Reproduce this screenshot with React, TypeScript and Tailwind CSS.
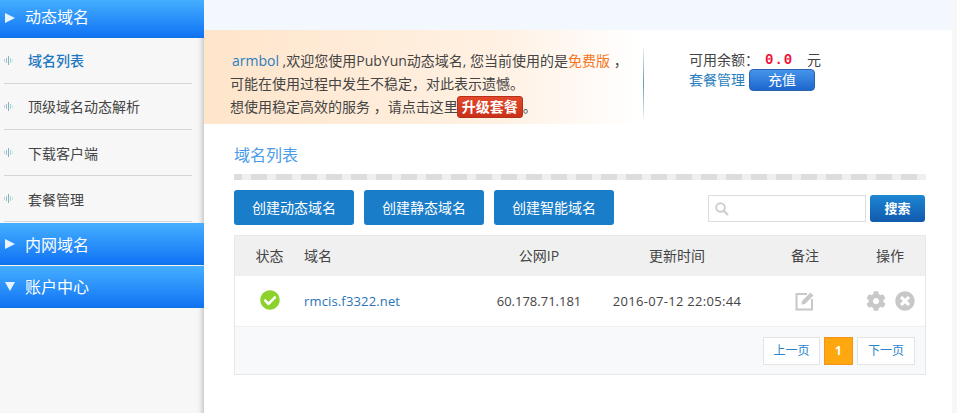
import { FaCheckCircle, FaCog, FaTimesCircle } from 'react-icons/fa'

const font = "font-['Open_Sans','Noto_Sans_CJK_SC',sans-serif]"

const menuItems = [
  { name: '域名列表', textClass: 'font-medium text-[#1f78c1]' },
  { name: '顶级域名动态解析', textClass: '' },
  { name: '下载客户端', textClass: 'mt-[2px]' },
  { name: '套餐管理', textClass: 'mt-[2px]' },
]

function Bullet() {
  return (
    <svg width="9" height="9" viewBox="0 0 9 9" className="shrink-0">
      <rect x="0" y="3" width="1" height="3" fill="#b9d4d8" />
      <rect x="2" y="2" width="1" height="5" fill="#9cc0c8" />
      <rect x="4" y="0" width="1" height="9" fill="#86b4bd" />
      <rect x="6" y="2" width="1" height="5" fill="#9fd8dc" />
      <rect x="8" y="3" width="1" height="3" fill="#c4eaec" />
    </svg>
  )
}

function SideHeader({ title, open }: { title: string; open?: boolean }) {
  return (
    <div
      className={`relative flex h-[42px] items-center gap-[10px] border-b-2 border-[#0f74e8] bg-gradient-to-b from-[#45aeff] to-[#1274f4] pl-[5px] text-[16px] text-white ${
        open ? 'pt-px' : 'pt-[3px]'
      }`}
    >
      <svg width="10" height="10" viewBox="0 0 10 10" className="-mt-[2px] shrink-0">
        {open ? <path d="M0 1 H10 L5 10 Z" fill="#e8f4ff" /> : <path d="M0 0 L10 5 L0 10 Z" fill="#e8f4ff" />}
      </svg>
      <span>{title}</span>
    </div>
  )
}

function Sidebar() {
  return (
    <aside className="w-[204px] shrink-0 bg-[#f7f7f7] shadow-[inset_-6px_0_5px_-4px_#c4c4c4]">
      <div className="relative flex h-[38px] items-center gap-[10px] border-b-2 border-[#0f74e8] bg-gradient-to-b from-[#45aeff] to-[#1274f4] pb-[2px] pl-[5px] text-[16px] text-white">
        <svg width="10" height="10" viewBox="0 0 10 10" className="mt-[2px] shrink-0">
          <path d="M0 0 L10 5 L0 10 Z" fill="#e8f4ff" />
        </svg>
        <span>动态域名</span>
      </div>
      <ul className="pb-px pl-[4px] pr-[12px]">
        {menuItems.map((item) => (
          <li
            key={item.name}
            className="flex h-[46px] items-center gap-[15px] border-b border-[#d6d6d6] text-[14px] text-[#444]"
          >
            <Bullet />
            <span className={item.textClass}>{item.name}</span>
          </li>
        ))}
      </ul>
      <SideHeader title="内网域名" />
      <div className="mt-px">
        <SideHeader title="账户中心" open />
      </div>
    </aside>
  )
}

function Banner() {
  return (
    <div className="flex h-[94px] bg-gradient-to-r from-[#fee5cb] via-[#fff1e3] via-40% to-white to-[58%] text-[14px] text-[#444]">
      <div className="w-[439px] shrink-0 pl-[26px] pt-[19px] leading-[23px]">
        <div className="whitespace-nowrap">
          <span className="ml-[2px] text-[#2a7ec0]">armbol</span> ,欢迎您使用PubYun动态域名, 您当前使用的是
          <span className="text-[#f5761f]">免费版</span> ，
        </div>
        <div className="whitespace-nowrap">可能在使用过程中发生不稳定，对此表示遗憾。</div>
        <div className="flex items-center whitespace-nowrap">
          想使用稳定高效的服务 ，请点击这里
          <span className="-ml-[1px] inline-flex h-[22px] w-[66px] items-center justify-center rounded-[3px] border border-[#b8301a] bg-gradient-to-b from-[#e2492a] to-[#c9301a] text-[14px] font-bold leading-none text-white">
            升级套餐
          </span>
          。
        </div>
      </div>
      <div className="mt-[17px] h-[72px] w-px bg-gradient-to-b from-[#f0f6f6] via-[#5f9ca6] to-[#f0f6f6]" />
      <div className="pl-[45px] pt-[20px] leading-[20px]">
        <div className="flex h-[19px] whitespace-nowrap">
          <span className="w-[76px]">可用余额：</span>
          <span className="w-[42px] font-['Liberation_Mono',monospace] font-bold tracking-[1px] text-[#f0103a]">0.0</span>
          <span>元</span>
        </div>
        <div className="flex items-center gap-[4px]">
          <span className="text-[#2a7ec0]">套餐管理</span>
          <button className="h-[22px] w-[66px] rounded-[4px] border border-[#2b62b0] bg-gradient-to-b from-[#4595ea] to-[#1d66cd] leading-none text-white">
            充值
          </button>
        </div>
      </div>
    </div>
  )
}

function Toolbar() {
  return (
    <div className="mt-[10px] flex items-start">
      <div className="flex gap-[10px]">
        {['创建动态域名', '创建静态域名', '创建智能域名'].map((label) => (
          <button key={label} className="h-[35px] w-[120px] rounded-[3px] bg-[#1a7dc9] text-[14px] text-white">
            {label}
          </button>
        ))}
      </div>
      <div className="ml-auto mr-px mt-[5px] flex gap-[4px]">
        <div className="flex h-[27px] w-[158px] items-center border border-[#dcdcdc] bg-white pl-[6px]">
          <svg width="14" height="14" viewBox="0 0 14 14" fill="none" stroke="#cfcfcf">
            <circle cx="5.5" cy="5.5" r="4.3" strokeWidth="2" />
            <path d="M8.8 8.8 L13 13" strokeWidth="2.4" />
          </svg>
        </div>
        <button className="h-[27px] w-[55px] rounded-[3px] bg-gradient-to-b from-[#1e87d2] to-[#1259ae] text-[13px] font-bold text-white">
          搜索
        </button>
      </div>
    </div>
  )
}

const rowGrid = 'grid grid-cols-[69px_171px_128px_148px_108px_62px] items-center'

function DomainTable() {
  return (
    <div className="mt-[10px] border border-[#e8e8e8] text-[14px] text-[#444]">
      <div className={`${rowGrid} h-[40px] bg-[#f0f0f0] pb-[2px] text-center`}>
        <span>状态</span>
        <span className="text-left">域名</span>
        <span>公网IP</span>
        <span>更新时间</span>
        <span>备注</span>
        <span>操作</span>
      </div>
      <div className={`${rowGrid} h-[50px] bg-white text-center text-[13px]`}>
        <span className="-mt-[3px] flex justify-center">
          <FaCheckCircle className="text-[20px] text-[#8cd12c]" />
        </span>
        <span className="mt-[2px] text-left tracking-[0.15px] text-[#2a75b8]">rmcis.f3322.net</span>
        <span className="mt-[2px]">60.178.71.181</span>
        <span className="mt-[2px] tracking-[0.3px]">2016-07-12 22:05:44</span>
        <span className="flex justify-center">
          <svg width="20" height="20" viewBox="0 0 20 20" fill="none">
            <path d="M12 3 H1.5 V18.5 H17 V8" stroke="#c8c8c8" strokeWidth="2" />
            <path d="M7 10 L15.5 1.5 L18.5 4.5 L10 13 L6.5 13.5 Z" fill="#c8c8c8" />
          </svg>
        </span>
        <span className="flex items-center justify-center gap-[9px]">
          <FaCog className="text-[20px] text-[#c8c8c8]" />
          <FaTimesCircle className="text-[20px] text-[#c8c8c8]" />
        </span>
      </div>
      <div className="flex h-[48px] items-start justify-end gap-[3px] border-t border-[#f0f0f0] bg-[#f8f9fb] pr-[10px] pt-[10px] text-[12px]">
        <button className="h-[28px] w-[57px] border border-[#e4e4e4] bg-white text-[#2a85c8]">上一页</button>
        <button className="mx-[1px] h-[28px] w-[29px] border border-[#f5921e] bg-[#ffa70f] font-bold text-white">1</button>
        <button className="h-[28px] w-[58px] border border-[#e4e4e4] bg-white text-[#2a85c8]">下一页</button>
      </div>
    </div>
  )
}

export default function App() {
  return (
    <div className={`flex h-[413px] w-[957px] overflow-hidden bg-white ${font}`}>
      <Sidebar />
      <main className="min-w-0 flex-1 border-r-[5px] border-[#f7f7f7]">
        <div className="h-[30px] bg-[#f2f8fe]" />
        <Banner />
        <div className="pl-[30px] pr-[26px]">
          <h2 className="mt-[20px] text-[16px] leading-[22px] text-[#4a9be8]">域名列表</h2>
          <div className="mt-[8px] h-[6px] bg-[repeating-linear-gradient(90deg,#dddddd_0,#dddddd_8px,#efefef_8px,#efefef_17px,#dddddd_17px,#dddddd_25px)]" />
          <Toolbar />
          <DomainTable />
        </div>
      </main>
    </div>
  )
}
